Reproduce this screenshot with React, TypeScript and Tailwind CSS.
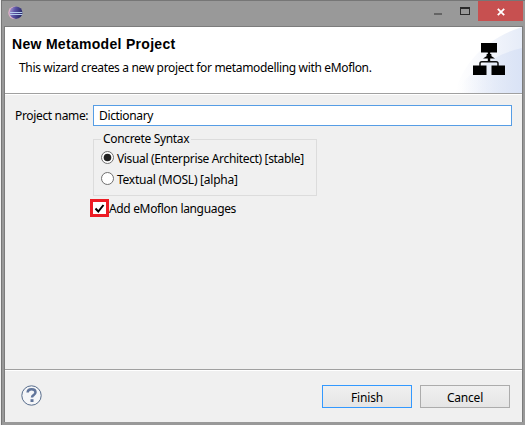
import React from "react";

function EclipseLogo() {
  return (
    <svg width="16" height="14" viewBox="0 0 16 14">
      <defs>
        <linearGradient id="ball" x1="0" y1="0" x2="1" y2="0.3">
          <stop offset="0" stopColor="#b9a5d6" />
          <stop offset="0.45" stopColor="#5c55a5" />
          <stop offset="1" stopColor="#29286b" />
        </linearGradient>
      </defs>
      <circle cx="6.5" cy="6.7" r="6.3" fill="#dcb0c6" />
      <ellipse cx="8" cy="6.7" rx="6.5" ry="6.2" fill="url(#ball)" />
      <path d="M2 6.5h12.4M2 8.5h12.4" stroke="#b5cdec" strokeWidth="1" />
    </svg>
  );
}

function TreeIcon() {
  return (
    <svg width="32" height="32" viewBox="0 0 32 32">
      <path d="M8 0h16v9.5H8zM0 22.5h13.5V32H0zM18.5 22.5H32V32H18.5z" fill="#000" />
      <path d="M16 9v10" stroke="#000" strokeWidth="2.4" />
      <path d="M14 11h4l1 1.5h-1.5l4.5 3H10l4.5-3H13z" fill="#000" />
      <path d="M7 23v-2.5q0-1.8 1.8-1.8h14.4q1.8 0 1.8 1.8V23" fill="none" stroke="#111" strokeWidth="1.5" />
    </svg>
  );
}

function Radio({ on, children }: { on?: boolean; children: React.ReactNode }) {
  return (
    <label className="flex h-[21px] items-center gap-[3px]">
      <svg width="13" height="13" viewBox="0 0 13 13">
        <circle cx="6.5" cy="6.5" r="6" fill="#fff" stroke="#6f6f6f" />
        {on && <circle cx="6.5" cy="6.5" r="3.8" fill="#212121" />}
      </svg>
      <span className="pt-0.5">{children}</span>
    </label>
  );
}

export default function App() {
  return (
    <div className="flex h-[425px] w-[525px] overflow-hidden whitespace-nowrap bg-[#f0f0f0] pl-px font-['Noto_Sans','Open_Sans',sans-serif] text-[12px] leading-4 tracking-[-0.34px] text-black">
      <div className="flex min-w-0 flex-1 flex-col border-l border-t border-[#767676] bg-[#999]">
        <header className="flex h-[25px] shrink-0 items-start">
          <div className="pl-[6px] pt-[5px]"><EclipseLogo /></div>
          <div className="ml-auto flex">
            <svg width="44" height="20" viewBox="0 0 44 20">
              <path d="M0 12h8v2H0z" fill="#646464" />
              <path d="M26 6h10v2H26zM26 6h1v8h-1zM35 6h1v8h-1zM26 13h10v1H26z" fill="#2b2b2b" />
            </svg>
            <div className="mr-[2px] flex h-5 w-[45px] items-center justify-center bg-[#c75050]">
              <svg width="8" height="8" viewBox="0 0 8 8" className="mt-px">
                <path d="M.8.8l6.4 6.4M7.2.8L.8 7.2" stroke="#fff" strokeWidth="1.8" />
              </svg>
            </div>
          </div>
        </header>
        <main className="ml-[2px] mr-[2px] flex h-[396px] flex-col border-x border-t border-[#7c7c7c] bg-[#f0f0f0]">
          <section className="relative flex h-[67px] shrink-0 justify-between border-b border-[#a0a0a0] bg-white">
            <div className="pl-[7px] pt-2">
              <h1 className="font-['Liberation_Sans',sans-serif] text-[14px] font-bold leading-[18px] tracking-[0.3px]">New Metamodel Project</h1>
              <p className="ml-[7px] mt-[7px]">This wizard creates a new project for metamodelling with eMoflon.</p>
            </div>
            <svg width="70" height="66" viewBox="0 0 70 66" className="absolute right-0 top-0">
              <defs>
                <linearGradient id="wash" x1="0" y1="0" x2="1" y2="0">
                  <stop offset="0" stopColor="#fff" />
                  <stop offset="0.3" stopColor="#f9fafd" />
                  <stop offset="1" stopColor="#e6ecf8" />
                </linearGradient>
                <linearGradient id="wash2" x1="0" y1="0" x2="1" y2="0">
                  <stop offset="0.1" stopColor="#dce5f6" stopOpacity="0" />
                  <stop offset="1" stopColor="#dae3f6" />
                </linearGradient>
              </defs>
              <path d="M70 0C38 10 12 32 3 66h67z" fill="url(#wash)" />
              <path d="M70 21C44 27 18 42 3 66h67z" fill="url(#wash2)" />
            </svg>
            <div className="relative mr-[17px] mt-4"><TreeIcon /></div>
          </section>
          <section className="flex h-[275px] shrink-0 flex-col border-t border-white pt-[10px]">
            <div className="flex items-center">
              <label className="w-[88px] pl-[10px] pt-px">Project name:</label>
              <div className="flex h-[21px] w-[419px] items-center border border-[#569de5] bg-white pl-[5px] pt-px">Dictionary</div>
            </div>
            <fieldset className="ml-[88px] mt-[5px] h-[65px] w-[224px] border border-[#dcdcdc] pl-[7px]">
              <legend className="h-4 px-[2px]">Concrete Syntax</legend>
              <Radio on>Visual (Enterprise Architect) [stable]</Radio>
              <Radio><span className="tracking-[-0.25px]">Textual (MOSL) [alpha]</span></Radio>
            </fieldset>
            <label className="ml-[85px] mt-[3px] flex items-center">
              <span className="flex h-[18px] w-[19px] items-center justify-center border-[3px] border-[#ed1c24] bg-white">
                <svg width="11" height="11" viewBox="0 0 11 11">
                  <path d="M1.5 5.5L4.3 8.5 9.5 2" fill="none" stroke="#000" strokeWidth="2" />
                </svg>
              </span>
              <span className="pt-0.5">Add eMoflon languages</span>
            </label>
          </section>
          <footer className="flex flex-1 border-t border-[#a0a0a0]">
            <div className="flex flex-1 items-start border-t border-white pl-4 pt-[14px]">
              <svg width="21" height="21" viewBox="0 0 21 21">
                <circle cx="10.5" cy="10.5" r="9.7" fill="#f5f6f8" stroke="#586d8c" />
                <path d="M6.6 7.5q.2-3.2 4-3.2 3.9 0 3.9 3 0 1.7-1.9 2.8-1.6.9-1.6 2.4" fill="none" stroke="#61759b" strokeWidth="2.5" />
                <path d="M9.5 14.2H12.5V17H9.5z" fill="#61759b" />
              </svg>
              <button className="ml-auto flex h-[23px] w-[90px] items-center justify-center border border-[#3399ff] bg-linear-to-b from-[#f0f0f0] to-[#e5e5e5] pt-0.5 tracking-[-0.2px]">Finish</button>
              <button className="ml-2 mr-3 flex h-[23px] w-[90px] items-center justify-center border border-[#acacac] bg-linear-to-b from-[#f0f0f0] to-[#e5e5e5] pt-0.5 tracking-[-0.2px]">Cancel</button>
            </div>
          </footer>
        </main>
      </div>
    </div>
  );
}
